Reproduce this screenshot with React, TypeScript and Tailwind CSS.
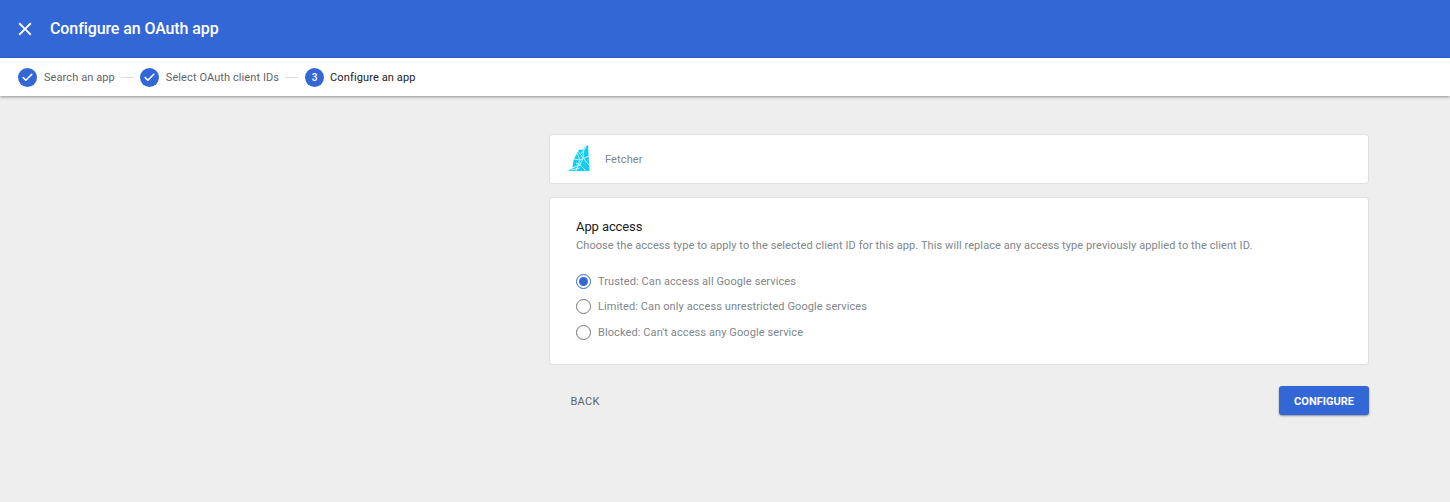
import { Check } from "lucide-react";

const options = [
  { label: "Trusted: Can access all Google services", selected: true },
  { label: "Limited: Can only access unrestricted Google services", selected: false },
  { label: "Blocked: Can't access any Google service", selected: false },
];

function StepDone({ label }: { label: string }) {
  return (
    <div className="flex items-center">
      <span className="flex h-[19px] w-[19px] items-center justify-center rounded-full bg-[#3367d6] text-white">
        <Check size={13} strokeWidth={3} />
      </span>
      <span className="ml-[7px] translate-y-[1px] text-[11px] tracking-[0.09px] text-[#5f6368]">{label}</span>
    </div>
  );
}

function FetcherLogo() {
  return (
    <svg width="23" height="28" viewBox="0 0 23 28" className="block">
      <path d="M20 0 L20.5 9 L21.5 26 L0 26 L4.5 23 L5.5 15 L9 8 L11 4.5 L14 5 L17 2 Z" fill="#12cdf2" />
      <path
        d="M9 8 L12 15 L8 26 M16 3 L15 13 L21 20 M6 14 L12 15 L21 11 M4 23 L12 20 L18 26 M18 2 L13 9 M3 25 L12 23 M10 6 L15 13 M12 20 L15 13 M8 18 L12 20"
        stroke="#d6f7fe"
        strokeWidth="0.9"
        fill="none"
      />
    </svg>
  );
}

export default function App() {
  return (
    <div className="flex min-h-screen flex-col bg-[#eeeeee] font-['Roboto',sans-serif]">
      <header className="flex h-[58px] items-center bg-[#3367d6] pl-[14px] text-white">
        <svg width="22" height="22" viewBox="0 0 24 24" fill="currentColor" className="block">
          <path d="M19 6.41L17.59 5 12 10.59 6.41 5 5 6.41 10.59 12 5 17.59 6.41 19 12 13.41 17.59 19 19 17.59 13.41 12z" />
        </svg>
        <h1 className="ml-[14px] text-[16px] font-medium tracking-[-0.1px]">Configure an OAuth app</h1>
      </header>

      <nav className="flex h-[38px] items-center bg-white pl-[18px] shadow-[0_1px_3px_rgba(0,0,0,0.4)]">
        <StepDone label="Search an app" />
        <span className="mx-[6px] h-px w-[13px] bg-[#dadce0]" />
        <StepDone label="Select OAuth client IDs" />
        <span className="ml-[6px] mr-[7px] h-px w-[13px] bg-[#dadce0]" />
        <div className="flex items-center">
          <span className="flex h-[19px] w-[19px] items-center justify-center rounded-full bg-[#3367d6] text-[10px] font-medium text-white">
            3
          </span>
          <span className="ml-[6px] translate-y-[1px] text-[11px] tracking-[0.12px] text-[#202124]">Configure an app</span>
        </div>
      </nav>

      <main className="ml-[549px] mt-[38px] w-[820px]">
        <section className="flex h-[50px] items-center rounded-[3px] border border-[#e0e0e0] bg-white pl-[18px]">
          <FetcherLogo />
          <span className="ml-[14px] translate-y-[1px] text-[11px] tracking-[0.13px] text-[#80868b]">Fetcher</span>
        </section>

        <section className="mt-[13px] h-[168px] rounded-[3px] border border-[#e0e0e0] bg-white pl-[26px] pt-[21px]">
          <h2 className="text-[13px] leading-[16px] tracking-[-0.1px] text-[#202124]">App access</h2>
          <p className="mt-[3px] text-[11px] leading-[16px] tracking-[0.085px] text-[#80868b]">
            Choose the access type to apply to the selected client ID for this app. This will replace any access type previously applied to the client ID.
          </p>
          <div className="mt-[19px] flex flex-col gap-[9.5px]">
            {options.map((o) => (
              <label key={o.label} className="flex h-[16px] items-center">
                <span
                  className={`flex h-[15px] w-[15px] items-center justify-center rounded-full border-[1.5px] ${
                    o.selected ? "border-[#3367d6]" : "border-[#757575]"
                  }`}
                >
                  {o.selected && <span className="h-[9px] w-[9px] rounded-full bg-[#3367d6]" />}
                </span>
                <span className="ml-[7px] translate-y-[1px] text-[11px] tracking-[0.1px] text-[#80868b]">{o.label}</span>
              </label>
            ))}
          </div>
        </section>

        <div className="mt-[21px] flex items-center justify-between">
          <button className="ml-[21.5px] translate-y-[2px] text-[11px] tracking-[0.25px] text-[#5f6368]">BACK</button>
          <button className="h-[29px] w-[90px] rounded-[3px] bg-[#3367d6] pt-[3px] text-[11px] font-bold text-white shadow-[0_1px_2px_rgba(0,0,0,0.4)]">
            CONFIGURE
          </button>
        </div>
      </main>
    </div>
  );
}
